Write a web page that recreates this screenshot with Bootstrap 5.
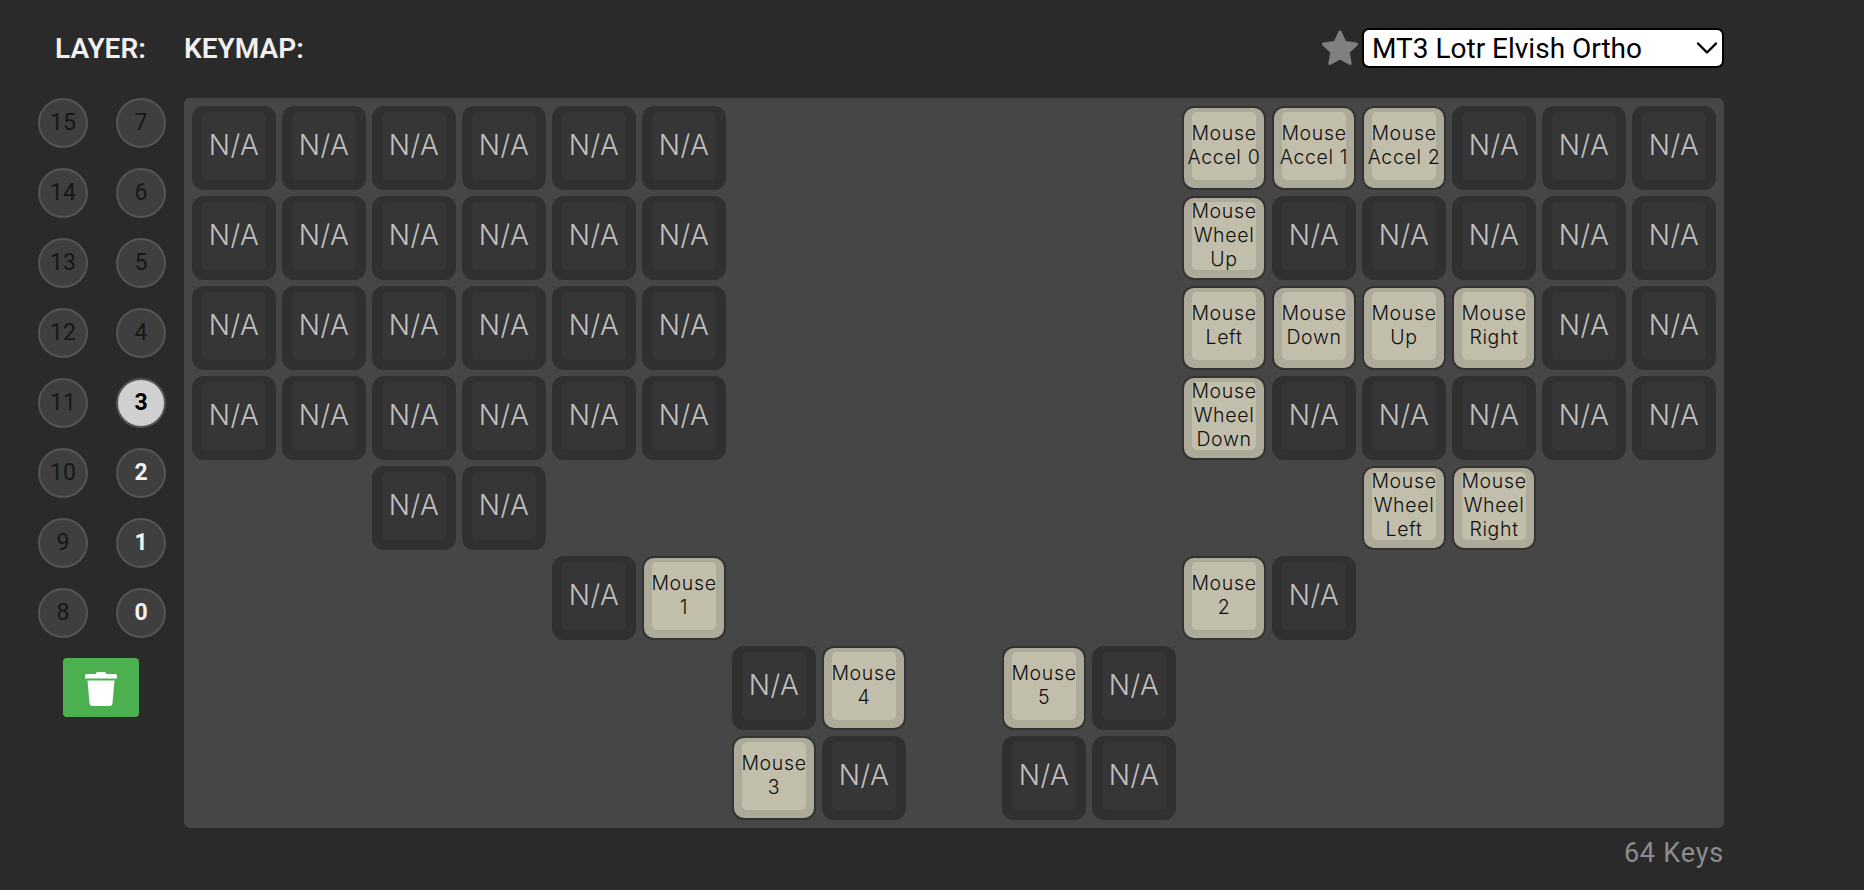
<!DOCTYPE html>
<html lang="en"><head><meta charset="utf-8"><title>Keymap</title>
<link href="https://cdn.jsdelivr.net/npm/bootstrap@5.3.0/dist/css/bootstrap.min.css" rel="stylesheet">
<style>
html,body{height:100%}
body{background:#2a2a2a;font-family:Roboto,"Liberation Sans",sans-serif;overflow:hidden}
.app-wrap{padding:28px 140px 0 0}
.head-row{height:40px;margin-bottom:30px}
.head-label{color:#f0f0f0;font-size:28px;font-weight:600;line-height:40px;padding-top:1px}
.layer-label{width:184px;padding-left:55px}
.star-ic{width:38px;height:38px;margin-right:3px}
.map-select.form-select{width:362px;height:40px;padding:2px 30px 0 8px;border:2px solid #000;border-radius:7px;font-size:28px;line-height:34px;color:#000;background-color:#fff;background-image:url("data:image/svg+xml,%3csvg xmlns='http://www.w3.org/2000/svg' viewBox='0 0 16 16'%3e%3cpath fill='none' stroke='%23000' stroke-width='1.6' stroke-linecap='round' stroke-linejoin='round' d='M2 5l6 6 6-6'/%3e%3c/svg%3e");background-position:right 3px center;background-size:24px 24px;font-family:Roboto,sans-serif}
.layer-side{width:184px;flex:none;padding-left:38px}
.layer-grid{display:grid;grid-template-columns:50px 50px;column-gap:28px;row-gap:20px;justify-content:start}
.layer-btn.btn{width:50px;height:50px;padding:0;border:2px solid #555;border-radius:50%;background:#3f3f3f;color:#171717;font-size:23px;line-height:46px;font-family:Roboto,sans-serif}
.layer-btn.on-data{color:#f2f2f2;font-weight:700}
.layer-btn.now{background:#d0d0d0;color:#000;font-weight:700}
.trash-btn.btn{grid-column:span 2;width:76px;height:59px;margin-left:25px;padding:0;border:0;border-radius:4px;background:#4caf50;display:flex;align-items:center;justify-content:center}
.key-panel{width:1540px;height:730px;padding:8px;background:#464646;border-radius:6px;display:grid;grid-template-columns:repeat(17,84px);grid-auto-rows:84px;gap:6px}
.skip2{grid-column:span 2}.skip3{grid-column:span 3}.skip4{grid-column:span 4}.skip5{grid-column:span 5}.skip6{grid-column:span 6}.skip9{grid-column:span 9}
.keycap{border-radius:12px;padding:6px 10px 10px;display:flex;font-family:Inter,"Noto Sans",sans-serif}
.keyface{flex:1 1 0;min-width:0;border-radius:5px;display:flex;align-items:center;justify-content:center;text-align:center;white-space:nowrap}
.key-na{background:#303030}
.key-na .keyface{background:#363636;color:#c0c0c0;font-size:28px;font-weight:300;letter-spacing:.5px;padding-bottom:3px}
.key-on{background:#aeaa99;border:2px solid #333;padding:4px 8px 8px;border-radius:12px}
.key-on .keyface{background:#c2beac;color:#0e0e0e;font-size:19.5px;line-height:24px;font-weight:300;letter-spacing:.65px;padding-bottom:3px}
.key-count{width:1724px;text-align:right;color:#8c8c8c;font-size:27px;letter-spacing:.8px;line-height:32px;margin-top:9px}
</style></head><body>
<div class="app-wrap">
<div class="d-flex align-items-center head-row">
<div class="head-label layer-label">LAYER:</div>
<div class="head-label">KEYMAP:</div>
<svg class="star-ic ms-auto" viewBox="0 0 38 38"><path fill="#808080" stroke="#808080" stroke-width="3" stroke-linejoin="round" d="M19 3l5 10.6 11.5 1.5-8.4 8 2.1 11.4L19 29l-10.200 5.500 2.100-11.400-8.400-8 11.500-1.500z"/></svg>
<select class="form-select map-select"><option>MT3 Lotr Elvish Ortho</option></select>
</div>
<div class="d-flex">
<div class="layer-side"><div class="layer-grid">
<button class="btn layer-btn">15</button><button class="btn layer-btn">7</button>
<button class="btn layer-btn">14</button><button class="btn layer-btn">6</button>
<button class="btn layer-btn">13</button><button class="btn layer-btn">5</button>
<button class="btn layer-btn">12</button><button class="btn layer-btn">4</button>
<button class="btn layer-btn">11</button><button class="btn layer-btn now">3</button>
<button class="btn layer-btn">10</button><button class="btn layer-btn on-data">2</button>
<button class="btn layer-btn">9</button><button class="btn layer-btn on-data">1</button>
<button class="btn layer-btn">8</button><button class="btn layer-btn on-data">0</button>
<button class="btn trash-btn" aria-label="Clear"><svg width="32" height="36" viewBox="0 0 32 36"><path fill="#fff" d="M11 3.500Q11 2 12.500 2h7Q21 2 21 3.500V4h9.500Q32 4 32 5.500V8.500H0V5.500Q0 4 1.500 4H11zM2.500 10.500h27L27.500 33Q27.300 36 24.500 36h-17Q4.700 36 4.500 33z"/></svg></button>
</div></div>
<div class="key-panel">
<!-- row 0 -->
<div class="keycap key-na"><div class="keyface">N/A</div></div><div class="keycap key-na"><div class="keyface">N/A</div></div><div class="keycap key-na"><div class="keyface">N/A</div></div><div class="keycap key-na"><div class="keyface">N/A</div></div><div class="keycap key-na"><div class="keyface">N/A</div></div><div class="keycap key-na"><div class="keyface">N/A</div></div>
<div class="skip5"></div>
<div class="keycap key-on"><div class="keyface">Mouse<br>Accel 0</div></div><div class="keycap key-on"><div class="keyface">Mouse<br>Accel 1</div></div><div class="keycap key-on"><div class="keyface">Mouse<br>Accel 2</div></div>
<div class="keycap key-na"><div class="keyface">N/A</div></div><div class="keycap key-na"><div class="keyface">N/A</div></div><div class="keycap key-na"><div class="keyface">N/A</div></div>
<!-- row 1 -->
<div class="keycap key-na"><div class="keyface">N/A</div></div><div class="keycap key-na"><div class="keyface">N/A</div></div><div class="keycap key-na"><div class="keyface">N/A</div></div><div class="keycap key-na"><div class="keyface">N/A</div></div><div class="keycap key-na"><div class="keyface">N/A</div></div><div class="keycap key-na"><div class="keyface">N/A</div></div>
<div class="skip5"></div>
<div class="keycap key-on"><div class="keyface">Mouse<br>Wheel<br>Up</div></div>
<div class="keycap key-na"><div class="keyface">N/A</div></div><div class="keycap key-na"><div class="keyface">N/A</div></div><div class="keycap key-na"><div class="keyface">N/A</div></div><div class="keycap key-na"><div class="keyface">N/A</div></div><div class="keycap key-na"><div class="keyface">N/A</div></div>
<!-- row 2 -->
<div class="keycap key-na"><div class="keyface">N/A</div></div><div class="keycap key-na"><div class="keyface">N/A</div></div><div class="keycap key-na"><div class="keyface">N/A</div></div><div class="keycap key-na"><div class="keyface">N/A</div></div><div class="keycap key-na"><div class="keyface">N/A</div></div><div class="keycap key-na"><div class="keyface">N/A</div></div>
<div class="skip5"></div>
<div class="keycap key-on"><div class="keyface">Mouse<br>Left</div></div><div class="keycap key-on"><div class="keyface">Mouse<br>Down</div></div><div class="keycap key-on"><div class="keyface">Mouse<br>Up</div></div><div class="keycap key-on"><div class="keyface">Mouse<br>Right</div></div>
<div class="keycap key-na"><div class="keyface">N/A</div></div><div class="keycap key-na"><div class="keyface">N/A</div></div>
<!-- row 3 -->
<div class="keycap key-na"><div class="keyface">N/A</div></div><div class="keycap key-na"><div class="keyface">N/A</div></div><div class="keycap key-na"><div class="keyface">N/A</div></div><div class="keycap key-na"><div class="keyface">N/A</div></div><div class="keycap key-na"><div class="keyface">N/A</div></div><div class="keycap key-na"><div class="keyface">N/A</div></div>
<div class="skip5"></div>
<div class="keycap key-on"><div class="keyface">Mouse<br>Wheel<br>Down</div></div>
<div class="keycap key-na"><div class="keyface">N/A</div></div><div class="keycap key-na"><div class="keyface">N/A</div></div><div class="keycap key-na"><div class="keyface">N/A</div></div><div class="keycap key-na"><div class="keyface">N/A</div></div><div class="keycap key-na"><div class="keyface">N/A</div></div>
<!-- row 4 -->
<div class="skip2"></div>
<div class="keycap key-na"><div class="keyface">N/A</div></div><div class="keycap key-na"><div class="keyface">N/A</div></div>
<div class="skip9"></div>
<div class="keycap key-on"><div class="keyface">Mouse<br>Wheel<br>Left</div></div><div class="keycap key-on"><div class="keyface">Mouse<br>Wheel<br>Right</div></div>
<div class="skip2"></div>
<!-- row 5 -->
<div class="skip4"></div>
<div class="keycap key-na"><div class="keyface">N/A</div></div><div class="keycap key-on"><div class="keyface">Mouse<br>1</div></div>
<div class="skip5"></div>
<div class="keycap key-on"><div class="keyface">Mouse<br>2</div></div><div class="keycap key-na"><div class="keyface">N/A</div></div>
<div class="skip4"></div>
<!-- row 6 -->
<div class="skip6"></div>
<div class="keycap key-na"><div class="keyface">N/A</div></div><div class="keycap key-on"><div class="keyface">Mouse<br>4</div></div>
<div></div>
<div class="keycap key-on"><div class="keyface">Mouse<br>5</div></div><div class="keycap key-na"><div class="keyface">N/A</div></div>
<div class="skip6"></div>
<!-- row 7 -->
<div class="skip6"></div>
<div class="keycap key-on"><div class="keyface">Mouse<br>3</div></div><div class="keycap key-na"><div class="keyface">N/A</div></div>
<div></div>
<div class="keycap key-na"><div class="keyface">N/A</div></div><div class="keycap key-na"><div class="keyface">N/A</div></div>
</div>
</div>
<div class="key-count">64 Keys</div>
</div>
<script src="https://cdn.jsdelivr.net/npm/bootstrap@5.3.0/dist/js/bootstrap.bundle.min.js"></script>
</body></html>
